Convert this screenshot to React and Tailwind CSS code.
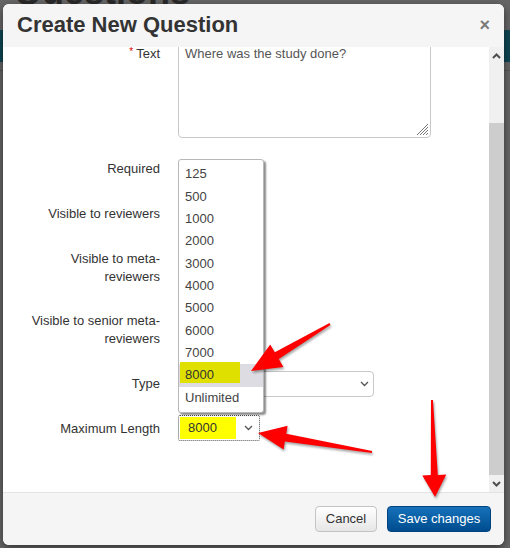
import React from 'react'

const lengths = ['125', '500', '1000', '2000', '3000', '4000', '5000', '6000', '7000', '8000', 'Unlimited']

// small "v" used by the selects
function Chevron({ up = false, color = '#555', bold = false }) {
  return (
    <svg width="9" height="6" viewBox="0 0 9 6">
      <path
        d={up ? 'M1 5L4.5 1.5L8 5' : 'M1 1L4.5 4.5L8 1'}
        fill="none"
        stroke={color}
        strokeWidth={bold ? 2 : 1.3}
      />
    </svg>
  )
}

function Row({ height, labelPad, label, children }) {
  return (
    <div className={`flex ${height}`}>
      <div className={`w-[157px] shrink-0 text-right text-[13px] leading-[18px] text-[#333] ${labelPad}`}>
        {label}
      </div>
      <div className="ml-[18px]">{children}</div>
    </div>
  )
}

export default function App() {
  return (
    <div className="relative h-[548px] w-[510px] overflow-hidden bg-[#666] font-['Liberation_Sans',Arial,sans-serif]">
      {/* page behind the backdrop */}
      <div className="h-[30px] overflow-hidden pl-[14px]">
        <div className="-mt-[26px] text-[36px] font-bold leading-[36px] text-[#2a2a2a]">Questions</div>
      </div>
      <div className="h-[32px] bg-[#0f4654]" />
      <div className="mt-[8px] h-px bg-[#555]" />

      {/* modal */}
      <div className="absolute inset-0 pl-[3px] pt-[4px]">
        <div className="flex h-[541px] w-[501px] flex-col overflow-hidden rounded-[6px] bg-white shadow-[0_3px_9px_rgba(0,0,0,0.5)]">
          {/* HEADER */}
          <div className="flex h-[43px] shrink-0 items-center justify-between bg-[#f5f5f5] pb-[2px] pl-[14px] pr-[14px]">
            <h1 className="text-[22px] font-bold text-[#333]">Create New Question</h1>
            <span className="text-[18px] font-bold leading-none text-[#7a7a7a]">×</span>
          </div>

          {/* BODY */}
          <div className="flex h-[445px] shrink-0">
            <div className="flex-1 overflow-hidden bg-white">
              <div className="-mt-[8px] flex flex-col">
                <Row
                  height="h-[118px]"
                  labelPad="pt-[6px]"
                  label={
                    <>
                      <span className="relative -top-[3px] mr-[3px] text-[10px] text-[#d00]">*</span>Text
                    </>
                  }
                >
                  <div className="flex h-[99px] w-[253px] flex-col rounded-[4px] border border-[#c8c8c8] bg-white pl-[6px] pt-[5px]">
                    <p className="text-[13px] leading-[18px] text-[#555]">Where was the study done?</p>
                    <div className="flex-1" />
                    <div className="flex justify-end pb-[1px] pr-[1px]">
                      <svg width="14" height="14" viewBox="0 0 14 14">
                        <path d="M13 2L2 13M13 5L5 13M13 8L8 13M13 11L11 13" stroke="#777" strokeWidth="1" />
                      </svg>
                    </div>
                  </div>
                </Row>

                <Row height="h-[45px]" labelPad="pt-[3px]" label="Required" />
                <Row height="h-[45px]" labelPad="pt-[3px]" label="Visible to reviewers" />
                <Row
                  height="h-[62px]"
                  labelPad="pt-[3px]"
                  label={
                    <>
                      Visible to meta-
                      <br />
                      reviewers
                    </>
                  }
                />
                <Row
                  height="h-[63px]"
                  labelPad="pt-[3px]"
                  label={
                    <>
                      Visible to senior meta-
                      <br />
                      reviewers
                    </>
                  }
                />

                <Row height="h-[44px]" labelPad="pt-[3px]" label="Type">
                  <div className="-mt-px flex h-[26px] w-[196px] items-center justify-end rounded-[4px] border border-[#c8c8c8] bg-white pr-[4px]">
                    <Chevron />
                  </div>
                </Row>

                <Row height="h-[60px]" labelPad="pt-[4px]" label="Maximum Length">
                  <div className="relative -mt-px h-[26px] w-[82px]">
                    {/* open option list */}
                    <div className="absolute bottom-[28px] left-0 w-[86px] rounded-[3px] border border-[#b8b8b8] bg-white pb-[3px] pt-[3px] shadow-[2px_2px_2px_rgba(0,0,0,0.45)]">
                      {lengths.map((v) =>
                        v === '8000' ? (
                          <div key={v} className="flex h-[22.4px] bg-[#dcdce2] pl-[1px]">
                            <div className="-mt-[2px] h-[21px] w-[60px] bg-[#e0e000] pl-[5px] pt-[4px] text-[13px] leading-[18px] text-[#333]">
                              {v}
                            </div>
                          </div>
                        ) : (
                          <div key={v} className="flex h-[22.4px] items-center pl-[6px] text-[13px] text-[#444]">
                            {v}
                          </div>
                        )
                      )}
                    </div>

                    <div className="flex h-[26px] w-[82px] items-center rounded-[2px] border border-dotted border-[#555] bg-white p-[1px]">
                      <div className="flex h-full w-[56px] items-center bg-[#ffff00] pl-[8px] text-[13px] text-[#333]">
                        8000
                      </div>
                      <div className="flex flex-1 justify-center pl-[3px]">
                        <Chevron />
                      </div>
                    </div>
                  </div>
                </Row>
              </div>
            </div>

            {/* scrollbar */}
            <div className="flex w-[15px] shrink-0 flex-col bg-[#f0f0f0]">
              <div className="flex h-[17px] items-center justify-center">
                <Chevron up color="#505050" bold />
              </div>
              <div className="h-[59px]" />
              <div className="h-[352px] bg-[#cdcdcd]" />
              <div className="flex h-[17px] items-center justify-center">
                <Chevron color="#505050" bold />
              </div>
            </div>
          </div>

          {/* FOOTER */}
          <div className="flex flex-1 items-start justify-end gap-[10px] border-t border-[#e3e3e3] bg-[#f5f5f5] pr-[13px] pt-[13px]">
            <button className="flex h-[26px] w-[62px] items-center justify-center rounded-[4px] border border-[#c4c4c4] bg-linear-to-b from-white to-[#e6e6e6] text-[13px] text-[#333]">
              Cancel
            </button>
            <button className="flex h-[26px] w-[104px] items-center justify-center rounded-[4px] border border-[#00437e] bg-linear-to-b from-[#1672bb] to-[#004c8e] text-[13px] text-white">
              Save changes
            </button>
          </div>
        </div>
      </div>

      {/* red annotation arrows */}
      <svg
        className="pointer-events-none absolute inset-0 drop-shadow-[1px_2px_1px_rgba(0,0,0,0.35)]"
        width="510"
        height="548"
        viewBox="0 0 510 548"
      >
        <polygon
          fill="#ff0000"
          points="251,371 270.2,344.5 274.8,352.3 329.5,323.1 330.5,324.9 278.8,359.1 283.4,366.9"
        />
        <polygon
          fill="#ff0000"
          points="258,433 287.6,425.8 286.3,433.7 372.2,451 371.8,453 284.9,441.5 283.6,449.4"
        />
        <polygon
          fill="#ff0000"
          points="435,497 422.3,475.4 430.8,475.1 431,400 433,400 437.8,474.9 446.3,474.6"
        />
      </svg>
    </div>
  )
}
